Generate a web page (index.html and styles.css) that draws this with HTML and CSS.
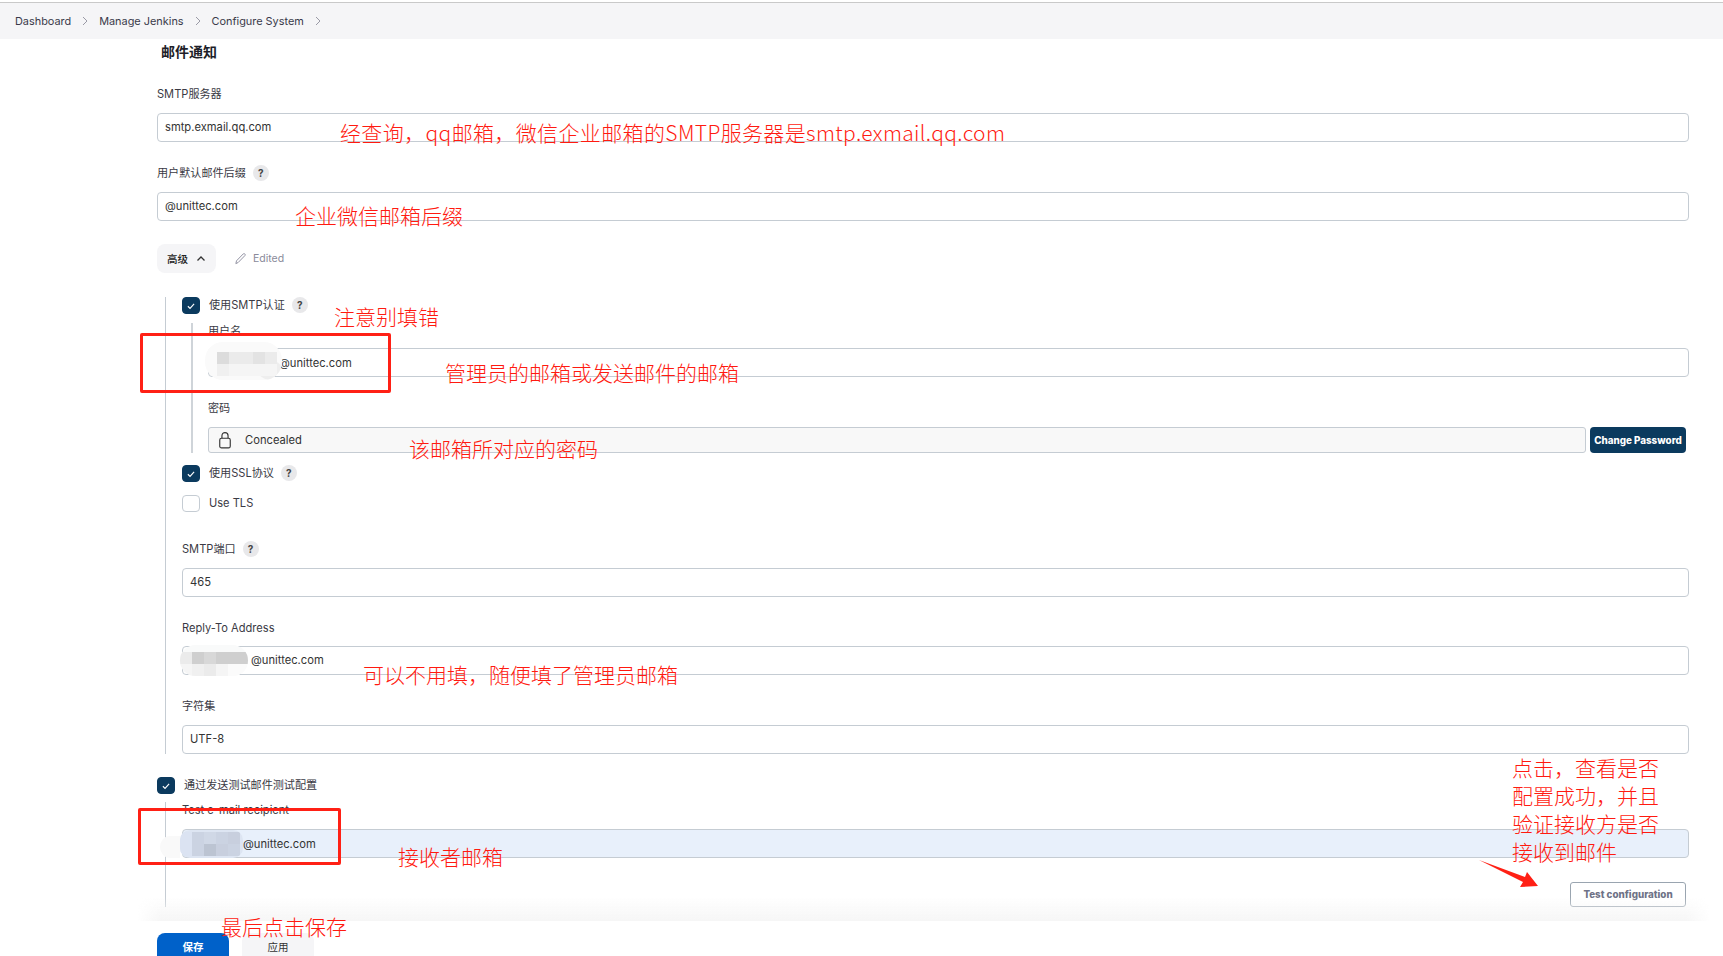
FILE: index.html
```html
<!DOCTYPE html>
<html lang="zh-CN">
<head>
<meta charset="utf-8">
<title>Configure System</title>
<link rel="stylesheet" href="styles.css">
</head>
<body>
<nav class="crumbs">
  <span>Dashboard</span><svg class="chev" viewBox="0 0 8 12"><path d="M2 2l4 4-4 4"/></svg>
  <span>Manage Jenkins</span><svg class="chev" viewBox="0 0 8 12"><path d="M2 2l4 4-4 4"/></svg>
  <span>Configure System</span><svg class="chev" viewBox="0 0 8 12"><path d="M2 2l4 4-4 4"/></svg>
</nav>
<main class="main">
  <h2 class="title">邮件通知</h2>
  <div class="label first">SMTP服务器</div>
  <div class="input">smtp.exmail.qq.com</div>
  <div class="label">用户默认邮件后缀<span class="help">?</span></div>
  <div class="input">@unittec.com</div>
  <div class="adv-row">
    <div class="adv">高级<svg class="up" viewBox="0 0 10 8"><path d="M1.5 5.5L5 2l3.5 3.5"/></svg></div>
    <svg class="pencil" viewBox="0 0 14 14"><path d="M2 12.500l.7-3L9.800 2.200c.6-.6 1.400-.6 1.900-.1s.5 1.300-.1 1.900L4.500 11.300z"/></svg>
    <span class="edited">Edited</span>
  </div>
  <section class="nest">
    <div class="check-row"><span class="box on"><svg viewBox="0 0 18 18"><path d="M5.500 9.300l2.400 2.400 4.600-5"/></svg></span>使用SMTP认证<span class="help">?</span></div>
    <div class="sub">
      <div class="label tight">用户名</div>
      <div class="input text-hidden-1">@unittec.com</div>
      <div class="label">密码</div>
      <div class="pw-row">
        <div class="pw">
          <svg class="lock" viewBox="0 0 16 20"><path d="M4.500 8V5a3.500 3.500 0 0 1 7 0v3"/><rect x="2" y="8" width="12" height="11" rx="2"/></svg>
          Concealed
        </div>
        <button class="change">Change Password</button>
      </div>
    </div>
    <div class="check-row ssl"><span class="box on"><svg viewBox="0 0 18 18"><path d="M5.500 9.300l2.400 2.400 4.600-5"/></svg></span>使用SSL协议<span class="help">?</span></div>
    <div class="check-row tls"><span class="box"></span>Use TLS</div>
    <div class="label port">SMTP端口<span class="help">?</span></div>
    <div class="input">465</div>
    <div class="label close">Reply-To Address</div>
    <div class="input text-hidden-2">@unittec.com</div>
    <div class="label">字符集</div>
    <div class="input">UTF-8</div>
  </section>
  <div class="check-row test"><span class="box on"><svg viewBox="0 0 18 18"><path d="M5.500 9.300l2.400 2.400 4.600-5"/></svg></span>通过发送测试邮件测试配置</div>
  <section class="nest nest2">
    <div class="label recipient">Test e-mail recipient</div>
    <div class="input autofill text-hidden-3">@unittec.com</div>
    <div class="test-row"><button class="test-btn">Test configuration</button></div>
  </section>
</main>

<footer class="footer">
  <div class="shade"></div>
  <div class="actions"><button class="save">保存</button><button class="apply">应用</button></div>
</footer>

<div class="blot b1"><div class="ball"></div><div class="cells"><i class="g1"></i><i class="g3"></i><i class="g3"></i><i class="g2"></i><i class="g3"></i><i class="g4"></i><i class="g5"></i><i class="g5"></i><i class="g5"></i><i class="g5"></i></div></div>
<div class="blot b2"><div class="cells six"><i class="g3"></i><i class="d1"></i><i class="d2"></i><i class="d1"></i><i class="d1"></i><i class="d1"></i><i class="g5"></i><i class="g4"></i><i class="g3"></i><i class="g5"></i><i class="g6"></i><i class="g6"></i></div></div>
<div class="blot b3"><div class="cells"><i class="u1"></i><i class="u3"></i><i class="u2"></i><i class="u3"></i><i class="u4"></i><i class="u1"></i><i class="u3"></i><i class="u5"></i><i class="u4"></i><i class="u3"></i></div></div>
<div class="halo"></div>

<div class="note n1">经查询，qq邮箱，微信企业邮箱的SMTP服务器是smtp.exmail.qq.com</div>
<div class="note n2">企业微信邮箱后缀</div>
<div class="note n3">注意别填错</div>
<div class="note n4">管理员的邮箱或发送邮件的邮箱</div>
<div class="note n5">该邮箱所对应的密码</div>
<div class="note n6">可以不用填，随便填了管理员邮箱</div>
<div class="note n7">接收者邮箱</div>
<div class="note n8">最后点击保存</div>
<div class="note n9">点击，查看是否<br>配置成功，并且<br>验证接收方是否<br>接收到邮件</div>
<div class="mark m1"></div>
<div class="mark m2"></div>
<svg class="arrow" viewBox="0 0 60 30"><polygon points="0,2 46,19 48,14 59,28 41,29 44,24"/></svg>
</body>
</html>
```
FILE: styles.css
```css
* { box-sizing: border-box; }
html, body { margin: 0; height: 956px; overflow: hidden; background: #fff; }
body { position: relative; font-family: Inter, "Noto Sans CJK SC", sans-serif; font-size: 11.200px; color: #333; }

.crumbs { margin-top: 2px; height: 37px; border-top: 1px solid #c9c9c9; background: #f5f5f7; display: flex; align-items: center; padding-left: 15px; font-size: 10.900px; color: #3a3a4a; }
.chev { width: 8px; height: 12px; margin: 0 10px 0 10px; fill: none; stroke: #9a9aa6; stroke-width: 1; }

.main { padding: 0 34px 0 157px; }
.title { margin: 3px 0 0 4px; height: 20px; line-height: 20px; font-size: 14px; font-weight: 700; color: #1e1e28; }
.label { height: 16px; line-height: 16px; margin-top: 23px; margin-bottom: 11px; font-size: 11.100px; color: #3a3a44; display: flex; align-items: center; }
.label.first { margin-top: 24px; }
.label.tight { margin-top: 0; margin-bottom: 9px; }
.label.close { margin-bottom: 10px; }
.label.recipient { margin-top: 1px; margin-bottom: 11px; }
.label.port { margin-top: 28px; margin-bottom: 11px; }
.help { width: 16px; height: 16px; margin-left: 7px; border-radius: 50%; background: #e8e8ea; display: inline-flex; align-items: center; justify-content: center; font-size: 10px; font-weight: 700; color: #444; flex: none; }

.input { height: 29px; border: 1px solid #c5ccd3; border-radius: 4px; padding-left: 7px; line-height: 27px; font-size: 11.200px; color: #333; background: #fff; }
.text-hidden-1 { padding-left: 70px; line-height: 28px; }
.text-hidden-2 { padding-left: 68px; }
.text-hidden-3 { padding-left: 60px; line-height: 28px; }
.autofill { background: #e8f0fb; }

.adv-row { margin-top: 23px; height: 29px; display: flex; align-items: center; }
.adv { width: 59px; height: 29px; border-radius: 8px; background: #f5f5f7; display: flex; align-items: center; padding-left: 10px; font-size: 10.500px; font-weight: 500; color: #222; }
.up { width: 10px; height: 8px; margin-left: 8px; fill: none; stroke: #333; stroke-width: 1.300; }
.pencil { width: 13px; height: 13px; margin-left: 18px; fill: none; stroke: #8a8a9c; stroke-width: 1; }
.edited { margin-left: 6px; font-size: 10.500px; color: #8a8a9a; }

.nest { margin: 24px 0 0 8px; padding-left: 16px; border-left: 1px solid #c5ccd3; height: 457px; }
.nest2 { margin-top: 7px; height: 105px; }
.check-row { height: 18px; display: flex; align-items: flex-start; line-height: 16px; font-size: 11.100px; color: #3a3a44; }
.box { width: 18px; height: 17px; margin-right: 9px; border: 1px solid #c5ccd3; border-radius: 4px; flex: none; display: flex; align-items: center; }
.box.on { background: #0b3a5e; border-color: #0b3a5e; }
.box svg { width: 16px; height: 16px; fill: none; stroke: #fff; stroke-width: 1.300; }
.ssl { margin-top: 12px; }
.tls { margin-top: 12px; }
.test { margin-top: 23px; }

.sub { margin: 8px 0 0 9px; padding-left: 15px; border-left: 2px solid #cfd4d9; height: 130px; }
.pw-row { display: flex; gap: 4px; padding-right: 3px; }
.pw { flex: 1; height: 26px; border: 1px solid #c5ccd3; border-radius: 3px; background: #f8f8f8; display: flex; align-items: center; padding-left: 9px; }
.lock { width: 14px; height: 18px; margin-right: 13px; fill: none; stroke: #333; stroke-width: 1.300; }
.change { width: 96px; height: 26px; border: 0; border-radius: 4px; background: #0b3a5e; color: #fff; font: 800 9.800px Inter, sans-serif; padding: 0; }

.test-row { display: flex; justify-content: flex-end; margin-top: 24px; padding-right: 3px; }
.test-btn { width: 116px; height: 25px; border: 1px solid #9aa5b0; border-radius: 3px; background: #fff; color: #6e7286; font: 800 9.800px Inter, sans-serif; padding: 0; }

.footer { position: absolute; left: 137px; right: 13px; top: 897px; bottom: 0; }
.shade { height: 24px; background: linear-gradient(to bottom, rgba(246,246,246,0), #f6f6f6); -webkit-mask-image: linear-gradient(to right, transparent, #000 24px, #000 calc(100% - 24px), transparent); mask-image: linear-gradient(to right, transparent, #000 24px, #000 calc(100% - 24px), transparent); }
.actions { display: flex; gap: 13px; margin: 12px 0 0 20px; background: #fff; }
.save, .apply { width: 72px; height: 30px; border: 0; border-radius: 8px; padding: 0 0 4px; font: 700 10.500px Inter, "Noto Sans CJK SC", sans-serif; }
.save { background: #0061c9; color: #fff; }
.apply { background: #f5f5f7; color: #333; font-weight: 400; }

.blot { position: absolute; background: #f9fafa; border-radius: 18px; overflow: hidden; }
.ball { position: absolute; right: 0; bottom: 0; width: 24px; height: 20px; border-radius: 50%; background: #eee; }
.cells { display: grid; grid-template-columns: repeat(5, 12px); grid-auto-rows: 12px; position: absolute; }
.cells.six { grid-template-columns: repeat(6, 12px); }
.cells i { display: block; }
.g1 { background: #dcdcdc; }
.g2 { background: #e3e3e3; }
.g3 { background: #ebebeb; }
.g4 { background: #f0f0f0; }
.g5 { background: #f5f5f5; }
.g6 { background: #fbfbfb; }
.d1 { background: #cfcfcf; }
.d2 { background: #d8d8d8; }
.u1 { background: #dbe3f2; }
.u2 { background: #d0d8e6; }
.u3 { background: #cbd3e2; }
.u4 { background: #c8cfde; }
.u5 { background: #bcc4d2; }
.b1 { left: 205px; top: 342px; width: 77px; height: 38px; background: #fafafa; }
.b1 .cells { left: 12px; top: 10px; }
.b2 { left: 180px; top: 645px; width: 68px; height: 31px; }
.b2 .cells { left: 0; top: 7px; }
.b3 { left: 180px; top: 830px; width: 63px; height: 28px; border-radius: 10px; background: #dde5f2; }
.b3 .cells { left: 0; top: 2px; }
.halo { position: absolute; left: 160px; top: 836px; width: 20px; height: 22px; border-radius: 50% 0 0 50%; background: #f9f9f9; }

.note { position: absolute; font-family: "Noto Sans CJK SC", sans-serif; font-size: 21px; font-weight: 300; line-height: 28px; color: #ff1a10; white-space: nowrap; }
.n1 { left: 340px; top: 118px; letter-spacing: 0.370px; }
.n2 { left: 295px; top: 201px; }
.n3 { left: 334px; top: 302px; }
.n4 { left: 445px; top: 358px; }
.n5 { left: 409px; top: 434px; }
.n6 { left: 363px; top: 660px; }
.n7 { left: 398px; top: 842px; }
.n8 { left: 221px; top: 912px; }
.n9 { left: 1512px; top: 753px; }

.mark { position: absolute; border: 3px solid #ff2015; border-radius: 2px; }
.m1 { left: 140px; top: 333px; width: 251px; height: 60px; }
.m2 { left: 138px; top: 808px; width: 203px; height: 57px; }
.arrow { position: absolute; left: 1479px; top: 858px; width: 60px; height: 30px; fill: #ff2015; }
```
